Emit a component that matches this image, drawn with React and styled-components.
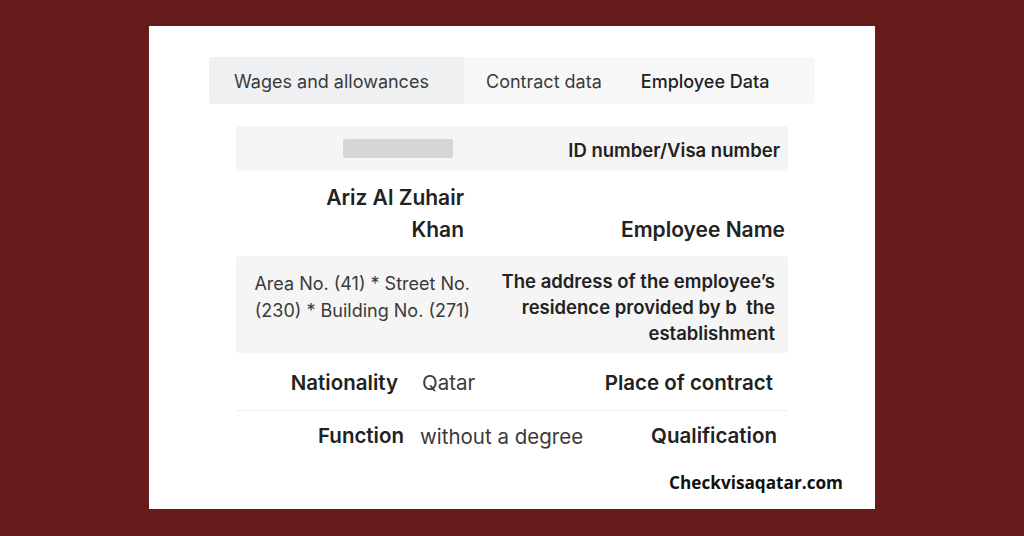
import React from 'react'
import styled, { createGlobalStyle } from 'styled-components'

const Global = createGlobalStyle`
  html, body {
    margin: 0;
    padding: 0;
    background: #651c1a;
  }
  body {
    font-family: Inter, "Noto Sans", sans-serif;
    color: #222;
  }
`

const Page = styled.div`
  width: 1024px;
  height: 536px;
  padding: 26px 0 0 149px;
  box-sizing: border-box;
`

const Card = styled.div`
  width: 726px;
  height: 483px;
  background: #fff;
  box-sizing: border-box;
  padding: 31px 60px 0 60px;
  display: flex;
  flex-direction: column;
`

const Tabs = styled.div`
  display: flex;
  height: 47px;
  background: #f7f7f8;
  border-radius: 3px;
  overflow: hidden;
`

const Tab = styled.div`
  display: flex;
  align-items: center;
  padding-left: ${p => p.$padLeft || 22}px;
  padding-top: 1px;
  font-size: 18px;
  color: ${p => (p.$strong ? '#222' : '#3a3a3a')};
  font-weight: ${p => (p.$strong ? 500 : 400)};
  background: ${p => (p.$active ? '#eef0f2' : 'transparent')};
  width: ${p => (p.$width ? p.$width + 'px' : 'auto')};
  box-sizing: border-box;
`

const Panel = styled.div`
  margin-top: 22px;
  padding: 0 27px;
  display: flex;
  flex-direction: column;
`

const Row = styled.div`
  display: grid;
  grid-template-columns: 234px 1fr;
  align-items: center;
  height: ${p => p.$h}px;
  background: ${p => (p.$shade ? '#f5f5f5' : 'transparent')};
  border-radius: 3px;
`

const TripleRow = styled.div`
  display: grid;
  grid-template-columns: ${p => p.$labelW}px 1fr auto;
  column-gap: ${p => p.$gap}px;
  align-items: center;
  height: ${p => p.$h}px;
  padding-right: ${p => p.$right}px;
  border-bottom: ${p => (p.$line ? '1px solid #efefef' : 'none')};
`

const Placeholder = styled.div`
  width: 110px;
  height: 19px;
  background: #d6d6d6;
  border-radius: 2px;
  margin-left: 107px;
`

const Value = styled.div`
  text-align: ${p => p.$align || 'right'};
  font-size: ${p => p.$size || 18}px;
  line-height: ${p => p.$lh || 27}px;
  font-weight: ${p => (p.$bold ? 600 : 400)};
  color: ${p => (p.$bold ? '#222' : '#3a3a3a')};
  padding-right: ${p => p.$right || 0}px;
  align-self: ${p => p.$self || 'center'};
  padding-top: ${p => p.$top || 0}px;
`

const Label = styled.div`
  text-align: right;
  font-size: ${p => p.$size || 18.5}px;
  line-height: ${p => p.$lh || 26}px;
  font-weight: 600;
  color: #222;
  padding-right: ${p => p.$right || 0}px;
  align-self: ${p => p.$self || 'center'};
  padding-bottom: ${p => p.$bottom || 0}px;
  padding-top: ${p => p.$top || 0}px;
`

const Footer = styled.div`
  margin-top: 10px;
  align-self: flex-end;
  margin-right: -28px;
  font-family: "Open Sans", Roboto, sans-serif;
  font-weight: 700;
  font-size: 17.2px;
  color: #111;
`

export default function App() {
  return (
    <>
      <Global />
      <Page>
        <Card>
          <Tabs>
            <Tab $active $width={255} $padLeft={25}>Wages and allowances</Tab>
            <Tab $padLeft={22}>Contract data</Tab>
            <Tab $strong $padLeft={39}>Employee Data</Tab>
          </Tabs>
          <Panel>
            <Row $h={45} $shade>
              <Placeholder />
              <Label $right={8} $top={2}>ID number/Visa number</Label>
            </Row>
            <Row $h={85}>
              <Value $bold $size={21} $lh={32} $right={6}>
                Ariz Al Zuhair
                <br />
                Khan
              </Value>
              <Label $size={21} $self="end" $right={3} $lh={32} $bottom={10}>
                Employee Name
              </Label>
            </Row>
            <Row $h={97} $shade>
              <Value $self="start" $top={14}>
                Area No. (41) * Street No.
                <br />
                (230) * Building No. (271)
              </Value>
              <Label $right={13} $top={4}>
                The address of the employee’s
                <br />
                residence provided by b&nbsp; the
                <br />
                establishment
              </Label>
            </Row>
            <TripleRow $h={57} $labelW={162} $gap={24} $right={15} $line>
              <Label $size={20.5} $top={2}>Nationality</Label>
              <Value $align="left" $size={20.5} $top={2}>Qatar</Value>
              <Label $size={20.5} $top={2}>Place of contract</Label>
            </TripleRow>
            <TripleRow $h={50} $labelW={168} $gap={16} $right={11}>
              <Label $size={20.5}>Function</Label>
              <Value $align="left" $size={20.5}>without a degree</Value>
              <Label $size={20.5}>Qualification</Label>
            </TripleRow>
          </Panel>
          <Footer>Checkvisaqatar.com</Footer>
        </Card>
      </Page>
    </>
  )
}
